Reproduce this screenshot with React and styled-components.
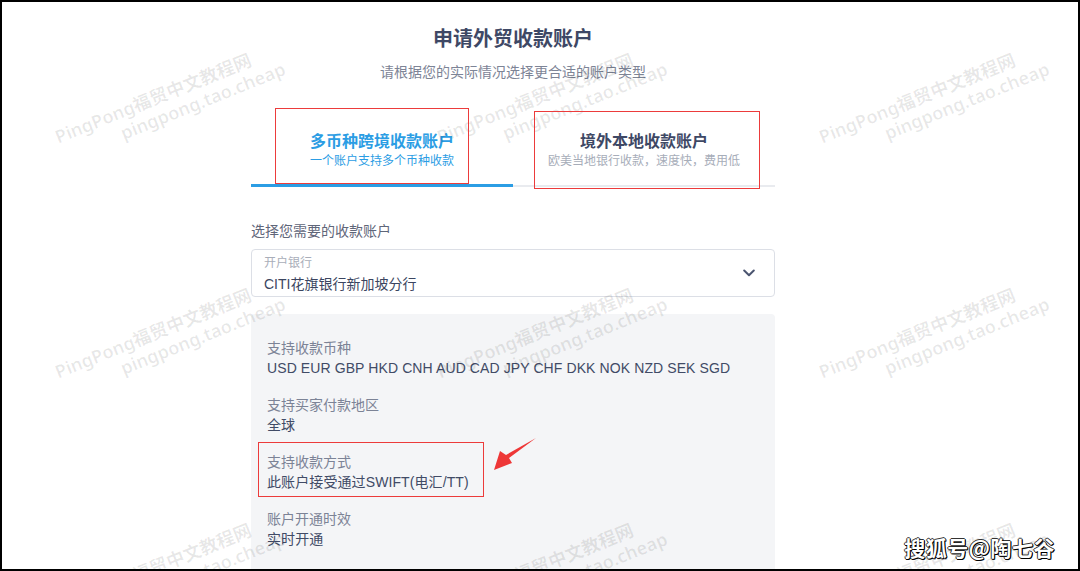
import React from "react";
import styled, { createGlobalStyle } from "styled-components";

const GlobalStyle = createGlobalStyle`
  html, body { margin: 0; padding: 0; background: #fff; }
  body { font-family: "Liberation Sans", "Noto Sans CJK SC", sans-serif; }
  #root { width: 1080px; height: 571px; }
`;

const Frame = styled.div`
  position: relative;
  width: 1080px;
  height: 571px;
  box-sizing: border-box;
  border: 2px solid #000;
  overflow: hidden;
  background: #fff;
  padding: 23px 0 0 249px;
`;

const Column = styled.main`
  width: 524px;
  display: flex;
  flex-direction: column;
`;

const Title = styled.h1`
  margin: 0;
  font-size: 20px;
  line-height: 28px;
  font-weight: 600;
  color: #3e4865;
  text-align: center;
`;

const Subtitle = styled.p`
  margin: 9px 0 0;
  font-size: 14px;
  line-height: 20px;
  color: #7d8496;
  text-align: center;
`;

const Tabs = styled.div`
  display: grid;
  grid-template-columns: 1fr 1fr;
  margin-top: 25px;
  border-bottom: 2px solid #e9ebef;
`;

const Tab = styled.div`
  display: flex;
  flex-direction: column;
  align-items: center;
  padding: 25px 0 14px;
  margin-bottom: -2px;
  border-bottom: 3px solid ${(p) => (p.$active ? "#2b9de4" : "transparent")};
`;

const TabTitle = styled.div`
  font-size: 16px;
  line-height: 20px;
  font-weight: 600;
  color: ${(p) => (p.$active ? "#2b9de4" : "#3e4865")};
`;

const TabSub = styled.div`
  font-size: 12px;
  line-height: 18px;
  color: ${(p) => (p.$active ? "#2b9de4" : "#a7adb9")};
`;

const SectionLabel = styled.div`
  margin-top: 34px;
  font-size: 14px;
  line-height: 20px;
  color: #5f6679;
`;

const Select = styled.div`
  margin-top: 8px;
  height: 48px;
  box-sizing: border-box;
  border: 1px solid #dcdfe6;
  border-radius: 4px;
  padding: 0 19px 0 12px;
  display: flex;
  align-items: center;
  justify-content: space-between;
  background: #fff;
`;

const SelectText = styled.div`
  display: flex;
  flex-direction: column;
  padding-top: 1px;
`;

const SelectLabel = styled.span`
  font-size: 12px;
  line-height: 16px;
  color: #a9aeb9;
`;

const SelectValue = styled.span`
  margin-top: 4px;
  font-size: 14px;
  line-height: 18px;
  color: #3b4560;
`;

const Panel = styled.section`
  margin-top: 17px;
  background: #f4f5f7;
  border-radius: 4px;
  padding: 24px 16px 40px;
  display: flex;
  flex-direction: column;
  gap: 17px;
`;

const Field = styled.div`
  display: flex;
  flex-direction: column;
`;

const FieldLabel = styled.span`
  font-size: 14px;
  line-height: 20px;
  color: #7c8396;
`;

const FieldValue = styled.span`
  font-size: 14px;
  line-height: 20px;
  color: #414b66;
  letter-spacing: 0.1px;
`;

const WatermarkLayer = styled.div`
  position: absolute;
  inset: 0;
  pointer-events: none;
`;

const Watermark = styled.div`
  position: absolute;
  left: ${(p) => p.$x}px;
  top: ${(p) => p.$y}px;
  transform-origin: 0 0;
  transform: rotate(-22deg);
  white-space: nowrap;
  font-family: "Noto Sans", "Noto Sans CJK SC", sans-serif;
  font-weight: 600;
  font-size: 18px;
  line-height: 21px;
  color: rgba(0, 0, 0, 0.09);
`;

const WatermarkLine = styled.div`
  padding-left: ${(p) => (p.$indent ? 62 : 0)}px;
`;

const Annotation = styled.div`
  position: absolute;
  left: ${(p) => p.$x}px;
  top: ${(p) => p.$y}px;
  width: ${(p) => p.$w}px;
  height: ${(p) => p.$h}px;
  box-sizing: border-box;
  border: 1px solid #ec3b3b;
  pointer-events: none;
`;

const Arrow = styled.svg`
  position: absolute;
  left: 488px;
  top: 432px;
`;

const Signature = styled.div`
  position: absolute;
  right: 23px;
  top: 533px;
  font-family: "Noto Sans CJK SC", sans-serif;
  font-weight: 700;
  font-size: 21px;
  line-height: 24px;
  color: #fff;
  letter-spacing: 0.5px;
  text-shadow: 1px 1px 0 #000, -1px 0 0 #333, 0 -1px 0 #333, 1px 0 0 #000, 0 1px 0 #000;
`;

const Chevron = () => (
  <svg width="12" height="8" viewBox="0 0 12 8">
    <path d="M1.2 1.5 L6 6.2 L10.8 1.5" fill="none" stroke="#4b5570" strokeWidth="2" strokeLinecap="round" strokeLinejoin="round" />
  </svg>
);

const fields = [
  { label: "支持收款币种", value: "USD EUR GBP HKD CNH AUD CAD JPY CHF DKK NOK NZD SEK SGD" },
  { label: "支持买家付款地区", value: "全球" },
  { label: "支持收款方式", value: "此账户接受通过SWIFT(电汇/TT)" },
  { label: "账户开通时效", value: "实时开通" },
];

const marks = [];
for (let r = 0; r < 3; r++) {
  for (let c = 0; c < 3; c++) {
    marks.push({ x: 50 + c * 382, y: 126 + r * 235 });
  }
}

export default function App() {
  return (
    <>
      <GlobalStyle />
      <Frame>
        <Column>
          <Title>申请外贸收款账户</Title>
          <Subtitle>请根据您的实际情况选择更合适的账户类型</Subtitle>
          <Tabs>
            <Tab $active>
              <TabTitle $active>多币种跨境收款账户</TabTitle>
              <TabSub $active>一个账户支持多个币种收款</TabSub>
            </Tab>
            <Tab>
              <TabTitle>境外本地收款账户</TabTitle>
              <TabSub>欧美当地银行收款，速度快，费用低</TabSub>
            </Tab>
          </Tabs>
          <SectionLabel>选择您需要的收款账户</SectionLabel>
          <Select>
            <SelectText>
              <SelectLabel>开户银行</SelectLabel>
              <SelectValue>CITI花旗银行新加坡分行</SelectValue>
            </SelectText>
            <Chevron />
          </Select>
          <Panel>
            {fields.map((f) => (
              <Field key={f.label}>
                <FieldLabel>{f.label}</FieldLabel>
                <FieldValue>{f.value}</FieldValue>
              </Field>
            ))}
          </Panel>
        </Column>

        <WatermarkLayer>
          {marks.map((m, i) => (
            <Watermark key={i} $x={m.x} $y={m.y}>
              <WatermarkLine>PingPong福贸中文教程网</WatermarkLine>
              <WatermarkLine $indent>pingpong.tao.cheap</WatermarkLine>
            </Watermark>
          ))}
        </WatermarkLayer>

        <Annotation $x={273} $y={106} $w={194} $h={76} />
        <Annotation $x={532} $y={109} $w={226} $h={78} />
        <Annotation $x={256} $y={440} $w={226} $h={55} />
        <Arrow width="50" height="40" viewBox="0 0 50 40">
          <polygon points="46,4 19,24 22,29 4,36 10,17 16,21" fill="#ee3737" />
        </Arrow>

        <Signature>搜狐号@陶七谷</Signature>
      </Frame>
    </>
  );
}
